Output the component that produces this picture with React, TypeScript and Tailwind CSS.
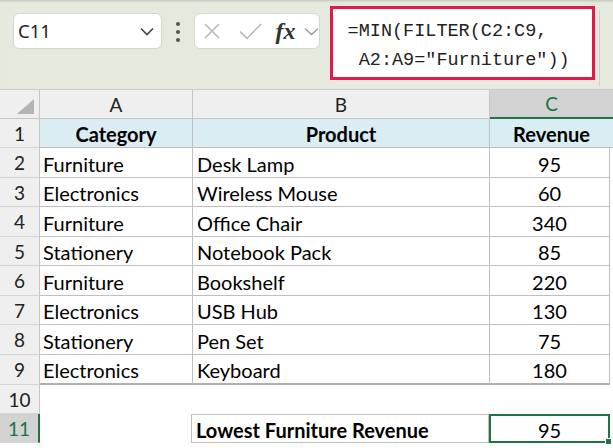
import React from 'react';

type Row = { n: number; a: string; b: string; c: string };

const rows: Row[] = [
  { n: 2, a: 'Furniture', b: 'Desk Lamp', c: '95' },
  { n: 3, a: 'Electronics', b: 'Wireless Mouse', c: '60' },
  { n: 4, a: 'Furniture', b: 'Office Chair', c: '340' },
  { n: 5, a: 'Stationery', b: 'Notebook Pack', c: '85' },
  { n: 6, a: 'Furniture', b: 'Bookshelf', c: '220' },
  { n: 7, a: 'Electronics', b: 'USB Hub', c: '130' },
  { n: 8, a: 'Stationery', b: 'Pen Set', c: '75' },
  { n: 9, a: 'Electronics', b: 'Keyboard', c: '180' },
];

// alternating heights so the 11 rows land on the same pixels as the sheet
const heights = ['h-[30px]', 'h-[29px]', 'h-[30px]', 'h-[29px]', 'h-[30px]', 'h-[29px]', 'h-[30px]', 'h-[30px]'];

const cellFont = { fontFamily: 'Lato, "Open Sans", sans-serif' };

function RowHead({ n, active }: { n: number | string; active?: boolean }) {
  return (
    <div
      className={`w-[40px] shrink-0 flex items-center justify-center pt-[2px] text-[19px] border-b border-[#d4d4d4] ${
        active ? 'bg-[#d2d2d2] text-[#1e7145] border-r-2 border-r-[#217346]' : 'bg-[#efefef] text-[#222] border-r border-r-[#c6c6c6]'
      }`}
    >
      {n}
    </div>
  );
}

export default function App() {
  return (
    <div className="w-[613px] h-[448px] overflow-hidden bg-white text-black" style={cellFont}>
      {/* formula bar */}
      <div className="h-[90px] bg-[#e6e9de] border-b border-[#c9cbc4] flex items-start px-[13px] shadow-[inset_0_3px_3px_-2px_rgba(0,0,0,0.18)]">
        <div
          className="mt-[13px] w-[151px] h-[36px] bg-white border border-[#d4d6d0] rounded-[6px] flex items-center justify-between pl-[4px] pr-[7px]"
          style={{ fontFamily: '"Noto Sans", "Open Sans", sans-serif' }}
        >
          <span className="text-[18.5px] text-[#222]">C11</span>
          <svg width="14" height="9" viewBox="0 0 14 9" fill="none" stroke="#444" strokeWidth="1.6">
            <path d="M1 1.5l6 6 6-6" />
          </svg>
        </div>
        <div className="mt-[22px] w-[32px] flex flex-col items-center gap-[4px]">
          <span className="w-[4px] h-[4px] rounded-full bg-[#555]" />
          <span className="w-[4px] h-[4px] rounded-full bg-[#555]" />
          <span className="w-[4px] h-[4px] rounded-full bg-[#555]" />
        </div>
        <div className="mt-[13px] w-[127px] h-[36px] bg-white border border-[#d4d6d0] rounded-[6px] flex items-center pl-[8px]">
          <svg width="18" height="18" viewBox="0 0 18 18" stroke="#b5b5b5" strokeWidth="1.5" fill="none">
            <path d="M2 2l14 14M16 2L2 16" />
          </svg>
          <svg className="ml-[18px]" width="23" height="17" viewBox="0 0 23 17" stroke="#b5b5b5" strokeWidth="1.5" fill="none">
            <path d="M1 8.5l7 7L22 1" />
          </svg>
          <span
            className="ml-[14px] text-[24px] italic font-bold text-[#333] leading-none"
            style={{ fontFamily: '"Liberation Serif", "DejaVu Serif", serif' }}
          >
            fx
          </span>
          <svg className="ml-[8px]" width="15" height="9" viewBox="0 0 15 9" fill="none" stroke="#999" strokeWidth="1.4">
            <path d="M1 1.5l6.5 6 6.5-6" />
          </svg>
        </div>
        <div className="ml-[10px] mt-[6px] w-[269px] h-[74px] bg-white border-[3px] border-[#e11a47] pl-[15px] pt-[8px]">
          <div
            className="text-[18.5px] leading-[29px] text-[#222] whitespace-pre"
            style={{ fontFamily: '"Liberation Mono", "DejaVu Sans Mono", monospace' }}
          >
            {'=MIN(FILTER(C2:C9,\n A2:A9="Furniture"))'}
          </div>
        </div>
        <div className="mt-[10px] ml-[3px] w-[2px] h-[76px] border-r border-[#cfd1ca]" />
      </div>

      {/* column headers */}
      <div className="flex h-[29px] text-[19px]">
        <div className="w-[40px] shrink-0 bg-[#efefef] border-r border-b border-[#c6c6c6] relative">
          <div className="absolute right-[5px] bottom-[4px] w-0 h-0 border-l-[17px] border-l-transparent border-b-[15px] border-b-[#b4b4b4]" />
        </div>
        <div className="w-[153px] shrink-0 bg-[#efefef] border-r border-b border-[#c6c6c6] flex items-center justify-center pt-[2px] text-[#222]">A</div>
        <div className="w-[297px] shrink-0 bg-[#efefef] border-r border-b border-[#c6c6c6] flex items-center justify-center pt-[2px] text-[#222]">B</div>
        <div className="flex-1 bg-[#d2d2d2] border-b-2 border-[#217346] flex items-center justify-center pt-[2px] text-[#1e7145]">C</div>
      </div>

      {/* row 1: table header */}
      <div className="flex h-[29px] text-[20px]">
        <RowHead n={1} />
        <div className="w-[153px] shrink-0 bg-[#daedf3] border-r border-b border-[#bfbfbf] flex items-center justify-center pt-[2px] font-bold">Category</div>
        <div className="w-[297px] shrink-0 bg-[#daedf3] border-r border-b border-[#bfbfbf] flex items-center justify-center pt-[2px] font-bold">Product</div>
        <div className="flex-1 bg-[#daedf3] border-b border-[#bfbfbf] flex items-center justify-center pt-[2px] font-bold">Revenue</div>
      </div>

      {rows.map((r, i) => (
        <div key={r.n} className={`flex ${heights[i]} text-[20px]`}>
          <RowHead n={r.n} />
          <div
            className={`w-[153px] shrink-0 border-r border-[#bfbfbf] flex items-center pt-[2px] pl-[3px] ${
              r.n === 9 ? 'border-b-2 border-b-[#b0b0b0]' : 'border-b'
            }`}
          >
            {r.a}
          </div>
          <div
            className={`w-[297px] shrink-0 border-r border-[#bfbfbf] flex items-center pt-[2px] pl-[4px] ${
              r.n === 9 ? 'border-b-2 border-b-[#b0b0b0]' : 'border-b'
            }`}
          >
            {r.b}
          </div>
          <div
            className={`w-[120px] shrink-0 border-r border-[#bfbfbf] flex items-center justify-center pt-[2px] ${
              r.n === 9 ? 'border-b-2 border-b-[#b0b0b0]' : 'border-b'
            }`}
          >
            {r.c}
          </div>
        </div>
      ))}

      {/* row 10 */}
      <div className="flex h-[29px] text-[20px]">
        <RowHead n={10} />
      </div>

      {/* row 11 */}
      <div className="flex h-[29px] text-[20px]">
        <RowHead n={11} active />
        <div className="w-[151px] shrink-0" />
        <div className="w-[298px] shrink-0 border border-[#bfbfbf] flex items-center pt-[2px] pl-[4px] font-bold">
          Lowest Furniture Revenue
        </div>
        <div className="w-[121px] shrink-0 border-2 border-[#217346] flex items-center justify-center pt-[2px] relative">
          95
          <span className="absolute -right-[4px] -bottom-[4px] w-[7px] h-[7px] bg-[#217346] border border-white" />
        </div>
      </div>
    </div>
  );
}
